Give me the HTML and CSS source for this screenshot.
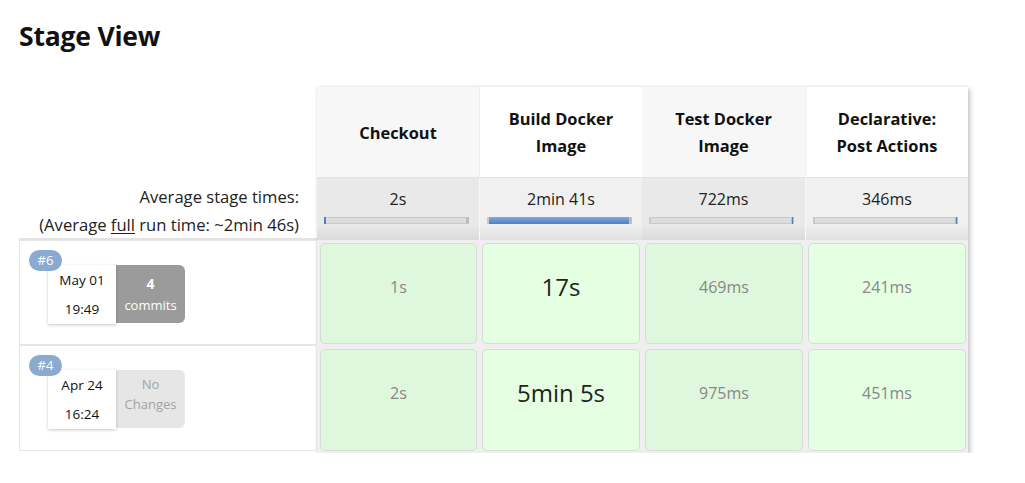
FILE: index.html
```html
<!DOCTYPE html>
<html>
<head>
<meta charset="utf-8">
<link rel="stylesheet" href="styles.css">
</head>
<body>
<div class="page">
  <h2 class="title">Stage View</h2>
  <div class="stage-view">
    <div class="left-col">
      <div class="left-head"></div>
      <div class="avg-label">
        <div>Average stage times:</div>
        <div>(Average <u>full</u> run time: ~2min 46s)</div>
      </div>
      <div class="run-row">
        <span class="badge">#6</span>
        <div class="run-info">
          <div class="date-box"><div>May 01</div><div>19:49</div></div>
          <div class="changes has-commits"><b>4</b><span>commits</span></div>
        </div>
      </div>
      <div class="run-row">
        <span class="badge">#4</span>
        <div class="run-info">
          <div class="date-box"><div>Apr 24</div><div>16:24</div></div>
          <div class="changes no-changes"><span>No</span><span>Changes</span></div>
        </div>
      </div>
    </div>
    <div class="stages">
      <div class="head odd">Checkout</div>
      <div class="head even">Build Docker<br>Image</div>
      <div class="head odd">Test Docker<br>Image</div>
      <div class="head even">Declarative:<br>Post Actions</div>

      <div class="avg odd"><div class="avg-time">2s</div><div class="bar"><div class="fill mark-left"></div></div></div>
      <div class="avg even"><div class="avg-time">2min 41s</div><div class="bar"><div class="fill full"></div></div></div>
      <div class="avg odd"><div class="avg-time">722ms</div><div class="bar"><div class="fill mark-right"></div></div></div>
      <div class="avg even"><div class="avg-time">346ms</div><div class="bar"><div class="fill mark-right"></div></div></div>

      <div class="cell odd"><div class="box">1s</div></div>
      <div class="cell even"><div class="box big">17s</div></div>
      <div class="cell odd"><div class="box">469ms</div></div>
      <div class="cell even"><div class="box">241ms</div></div>

      <div class="cell odd"><div class="box">2s</div></div>
      <div class="cell even"><div class="box big">5min 5s</div></div>
      <div class="cell odd"><div class="box">975ms</div></div>
      <div class="cell even"><div class="box">451ms</div></div>
    </div>
  </div>
</div>
</body>
</html>
```

FILE: styles.css
```css
html, body {
  margin: 0;
  padding: 0;
  background: #fff;
}
body {
  font-family: "Open Sans", "Noto Sans", sans-serif;
  color: #222;
}
.page {
  padding: 0 0 0 19px;
}
.title {
  margin: 0;
  padding-top: 18px;
  height: 87px;
  box-sizing: border-box;
  font-size: 26.5px;
  line-height: 36px;
  font-weight: 700;
  color: #111;
  letter-spacing: -0.2px;
}
.stage-view {
  display: flex;
  align-items: flex-start;
}
.left-col {
  width: 298px;
  display: flex;
  flex-direction: column;
}
.left-head {
  height: 90px;
}
.avg-label {
  height: 63px;
  box-sizing: border-box;
  border-bottom: 2px solid #e3e3e3;
  text-align: right;
  padding: 6px 18px 0 0;
  font-size: 16.6px;
  line-height: 28px;
  color: #222;
}
.avg-label u {
  text-underline-offset: 2px;
}
.run-row {
  position: relative;
  height: 105px;
  box-sizing: border-box;
  border: 1px solid #e6e6e6;
  padding: 24px 0 0 28px;
}
.run-row + .run-row {
  height: 106px;
}
.badge {
  position: absolute;
  left: 9px;
  top: 9px;
  width: 33px;
  height: 21px;
  border-radius: 11px;
  background: #8aaad0;
  color: #fff;
  font-size: 13px;
  line-height: 21px;
  text-align: center;
  z-index: 2;
}
.run-info {
  display: flex;
}
.date-box {
  width: 68px;
  height: 59px;
  background: #fff;
  box-shadow: 0 1px 3px rgba(0,0,0,0.22);
  display: flex;
  flex-direction: column;
  justify-content: center;
  gap: 7px;
  font-size: 13.5px;
  line-height: 22px;
  text-align: center;
  color: #111;
  position: relative;
  z-index: 1;
}
.changes {
  width: 69px;
  height: 58px;
  border-radius: 0 6px 6px 0;
  display: flex;
  flex-direction: column;
  justify-content: center;
  align-items: center;
  font-size: 13px;
  line-height: 20px;
}
.has-commits {
  background: #9b9b9b;
  color: #fff;
}
.has-commits b {
  font-size: 14px;
  line-height: 22px;
}
.no-changes {
  background: #e6e6e6;
  color: #a3a3a3;
  justify-content: flex-start;
  padding-top: 4px;
  box-sizing: border-box;
}
.stages {
  width: 651px;
  display: grid;
  grid-template-columns: 162px 163px 163px 163px;
  grid-template-rows: 90px 63px 106px 107px;
  box-shadow: 2px 2px 5px rgba(0,0,0,0.24), 0 -1px 2px rgba(0,0,0,0.05);
}
.head {
  display: flex;
  align-items: center;
  justify-content: center;
  text-align: center;
  font-weight: 700;
  font-size: 16.4px;
  line-height: 27px;
  color: #111;
}
.head.odd { background: #f7f7f7; }
.head.even { background: #fff; border-left: 1px solid #eeeeee; }
.avg {
  border-top: 1px solid #e2e2e2;
  box-sizing: border-box;
  padding-top: 9px;
  text-align: center;
  font-size: 16px;
  color: #222;
}
.avg.odd { background: linear-gradient(to bottom, #e9e9e9 0%, #e9e9e9 75%, #dadada 100%); }
.avg.even { background: linear-gradient(to bottom, #f0f0f0 0%, #f0f0f0 75%, #e0e0e0 100%); border-left: 1px solid #f8f8f8; }
.avg-time {
  line-height: 24px;
}
.bar {
  margin: 6px 0 0 7px;
  width: 145px;
  height: 7px;
  box-sizing: border-box;
  background: #dcdcdc;
  border: 1px solid #c9c9c9;
  border-right: 3px solid #bdbdbd;
  border-left: 2px solid #c9c9c9;
  position: relative;
}
.fill {
  position: absolute;
  top: -1px;
  bottom: -1px;
}
.fill.full {
  left: 0;
  right: 0;
  background: linear-gradient(to bottom, #86a8db, #4c7ecb);
}
.fill.mark-left {
  left: -2px;
  width: 2px;
  background: #4c7ecb;
}
.fill.mark-right {
  right: -2px;
  width: 1px;
  background: #4c7ecb;
}
.cell {
  background: #efefef;
  padding: 3px 2px 2px 3px;
}
.box {
  height: 100%;
  box-sizing: border-box;
  border: 1px solid #d8dcd6;
  border-radius: 5px;
  display: flex;
  justify-content: center;
  padding-top: 32px;
  font-size: 16px;
  line-height: 22px;
  color: #888;
}
.cell.odd .box { background: #dff7dd; }
.cell.even .box { background: #e5ffe2; }
.box.big {
  font-size: 24px;
  line-height: 30px;
  padding-top: 28px;
  color: #222;
}
```
